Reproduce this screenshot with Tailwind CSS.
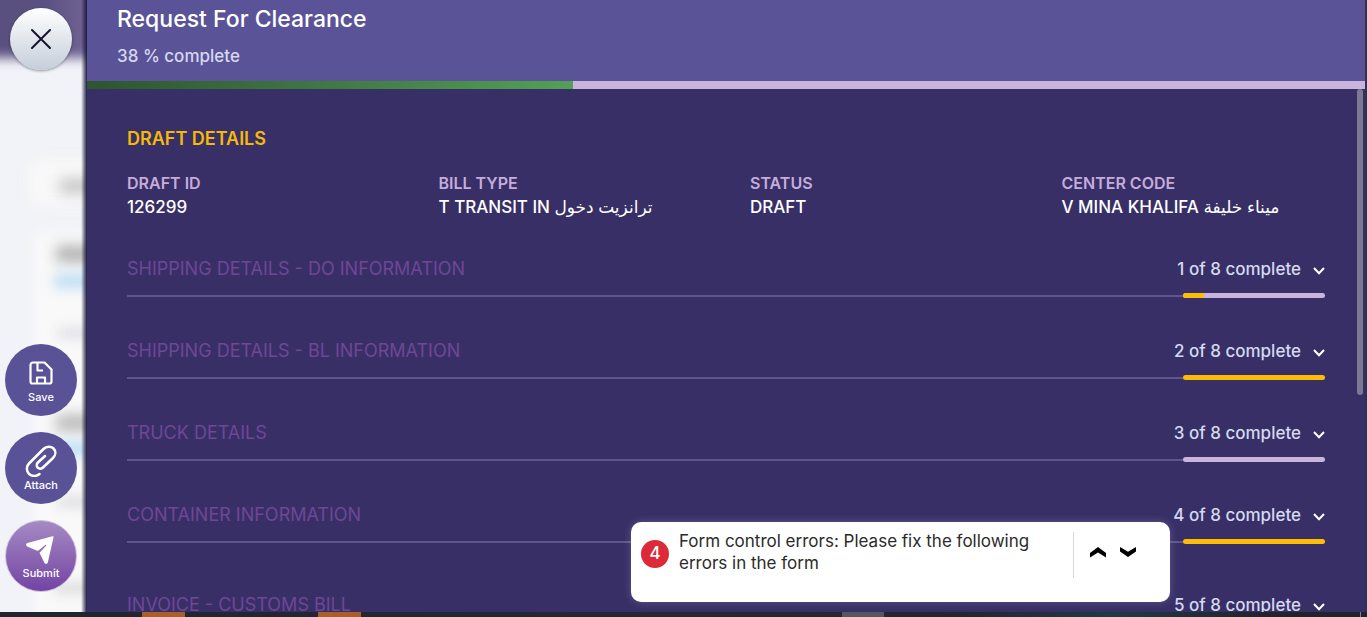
<!DOCTYPE html>
<html lang="en">
<head>
<meta charset="utf-8">
<meta name="viewport" content="width=device-width, initial-scale=1">
<title>Request For Clearance</title>
<script src="https://cdn.jsdelivr.net/npm/@tailwindcss/browser@4"></script>
</head>
<body class="flex h-screen flex-col overflow-hidden bg-[#2c3354] font-['Inter','Noto_Sans','DejaVu_Sans',sans-serif]">
<div class="relative flex min-h-0 flex-1 pr-0.5">

  <!-- Action rail over the blurred page -->
  <aside class="relative flex w-[87px] shrink-0 flex-col items-center overflow-hidden bg-[#f2f3f8] pt-2 pr-[5px] pb-5">
    <div class="absolute inset-0" aria-hidden="true">
      <div class="absolute -inset-x-4 -top-4 h-[74px] bg-linear-to-r from-[#59507f] from-50% to-[#7b6a9b] blur-[6px]"></div>
      <div class="absolute top-[160px] left-[30px] h-[46px] w-20 rounded-lg bg-[#f8f8f8] blur-[7px]"></div>
      <div class="absolute top-[232px] left-[34px] h-[400px] w-20 rounded-lg bg-[#f9f9f9] blur-[7px]"></div>
      <div class="absolute top-[179px] left-[60px] h-3.5 w-12 bg-[#c4c4c4] blur-[7px]"></div>
      <div class="absolute top-[246px] left-[56px] h-4 w-12 bg-[#b0b0b0] blur-[7px]"></div>
      <div class="absolute top-[273px] left-[54px] h-4 w-12 bg-[#c4e1f4] blur-[6px]"></div>
      <div class="absolute top-[327px] left-[58px] h-3 w-12 bg-[#e2e2e8] blur-[6px]"></div>
      <div class="absolute top-[415px] left-[56px] h-4 w-12 bg-[#b8b8b8] blur-[7px]"></div>
      <div class="absolute top-[441px] left-[54px] h-4 w-12 bg-[#c4e1f4] blur-[6px]"></div>
      <div class="absolute top-[496px] left-[58px] h-3 w-12 bg-[#e0e0e4] blur-[6px]"></div>
      <div class="absolute top-[582px] left-[54px] h-3 w-12 bg-[#dedede] blur-[6px]"></div>
      <div class="absolute inset-y-0 right-0 w-1.5 bg-linear-to-r from-transparent to-[#1d1b40]"></div>
    </div>
    <button type="button" aria-label="Close" class="relative flex size-[62px] items-center justify-center rounded-full bg-linear-to-b from-white to-[#c5ced9] shadow-[0_1px_3px_#00000066]">
      <svg class="size-5" viewBox="0 0 20 20" fill="none" stroke="#14142f" stroke-width="2" stroke-linecap="round"><path d="M1 1l18 18M19 1L1 19"/></svg>
    </button>
    <div class="relative mt-auto flex flex-col items-center gap-4">
      <button type="button" class="flex size-[72px] flex-col items-center justify-end rounded-full bg-[#5a5297] pb-3 text-white">
        <svg class="mb-[5px] size-6" viewBox="0 0 24 24" fill="none" stroke="currentColor" stroke-width="2.2" stroke-linejoin="round"><path d="M4 1.500h11.500L22.500 8.500V20.500a2 2 0 0 1-2 2H3.500a2 2 0 0 1-2-2V4a2.500 2.500 0 0 1 2.500-2.500zM8.500 2v7.500H14M8 22v-5.500h8V22"/></svg>
        <span class="text-[11px] leading-[14px] font-medium">Save</span>
      </button>
      <button type="button" class="flex size-[72px] flex-col items-center justify-end rounded-full bg-[#5a5297] pb-3 text-white">
        <svg class="mb-px h-8 w-8" viewBox="0 0 32 32" fill="none" stroke="currentColor" stroke-width="2.500" stroke-linecap="round"><path d="M14.500 29c-3 2.700-7.800 2.500-10.500-.2s-3-7.300 0-10.300L18.500 4c3-3 7.500-3 10-.5s2.500 6.500-.5 9.500L18 22.500c-1.500 1.500-4 1.500-5.300.2s-1.300-3.700.2-5.200L20 11"/></svg>
        <span class="text-[11px] leading-[14px] font-medium">Attach</span>
      </button>
      <button type="button" class="flex size-[72px] flex-col items-center justify-end rounded-full border border-[#cdbfdb] bg-linear-to-b from-[#a68bc3] to-[#7342a3] bg-origin-border pb-[11px] text-white">
        <svg class="mr-0.5 mb-0.5 size-7" viewBox="0 0 28 28" fill="currentColor"><path d="M26.500 .300c.8-.2 1.200.4 1 1.100L21.800 26.500c-.4 1.600-2.600 1.800-3.300.4l-5-10.200 6.600-6.900c.5-.6-.2-1.300-.8-.8l-7.500 6L1.200 10.500C-.3 9.800-.2 7.600 1.400 7.100z"/></svg>
        <span class="text-[11px] leading-[14px] font-medium">Submit</span>
      </button>
    </div>
  </aside>

  <!-- Clearance form panel -->
  <main class="relative flex min-w-0 flex-1 flex-col overflow-hidden bg-[#382f67]">
    <header class="flex h-[81px] shrink-0 flex-col bg-[#5b5398] px-[30px] pt-1">
      <h1 class="text-[23px] leading-[30px] font-medium text-white">Request For Clearance</h1>
      <p class="mt-2.5 text-[17px] leading-6 font-medium text-[#d5d9ee]">38 % complete</p>
    </header>
    <div class="h-2 shrink-0 bg-[#c9b5dc]" role="progressbar" aria-valuenow="38" aria-valuemin="0" aria-valuemax="100" aria-label="Form progress">
      <div class="h-full bg-linear-to-r from-[#2d5530] to-[#53a057]" style="width:38%"></div>
    </div>

    <div class="min-h-0 flex-1 overflow-hidden px-10 pt-[38px]">
      <h2 class="text-lg leading-6 font-semibold text-[#f5b90a]">DRAFT DETAILS</h2>
      <dl class="mt-5 grid grid-cols-4 gap-x-12 whitespace-nowrap">
        <div><dt class="text-base leading-6 font-semibold text-[#c5addb]">DRAFT ID</dt><dd class="text-[17px] leading-6 font-medium text-white">126299</dd></div>
        <div><dt class="text-base leading-6 font-semibold text-[#c5addb]">BILL TYPE</dt><dd class="text-[17px] leading-6 font-medium text-white">T TRANSIT IN <bdi lang="ar">ترانزيت دخول</bdi></dd></div>
        <div><dt class="text-base leading-6 font-semibold text-[#c5addb]">STATUS</dt><dd class="text-[17px] leading-6 font-medium text-white">DRAFT</dd></div>
        <div><dt class="text-base leading-6 font-semibold text-[#c5addb]">CENTER CODE</dt><dd class="text-[17px] leading-6 font-medium text-white">V MINA KHALIFA <bdi lang="ar">ميناء خليفة</bdi></dd></div>
      </dl>

      <div id="sections" class="mt-[38px] flex flex-col gap-[41px]"></div>
    </div>
    <div class="absolute top-[89px] right-0.5 h-[306px] w-1.5 rounded-full bg-[#7f7891]" aria-hidden="true"></div>
  </main>

  <!-- Error toast -->
  <div role="alert" class="absolute right-[197px] bottom-2.5 flex h-20 w-[539px] items-start rounded-[10px] bg-white px-2.5 pt-2 shadow-[0_0_8px_#ffffff33]">
    <span class="mt-2.5 flex size-7 shrink-0 items-center justify-center rounded-full bg-[#dc2a38] text-[17px] font-medium text-white">4</span>
    <p class="ml-2.5 flex-1 text-[17px] leading-[22px] text-[#2b2b2b]">Form control errors: Please fix the following errors in the form</p>
    <div class="mt-0.5 flex h-[46px] w-[87px] items-start gap-3.5 border-l border-[#d9d9d9] pt-3.5 pl-4">
      <button type="button" aria-label="Previous error"><svg class="h-3 w-4" viewBox="0 0 16 12"><path d="M0 7L8 1l8 6v4.500L8 6.500 0 11.500z"/></svg></button>
      <button type="button" aria-label="Next error"><svg class="h-3 w-4" viewBox="0 0 16 12"><path d="M0 1l8 4.800L16 1v4.500L8 11 0 5.500z"/></svg></button>
    </div>
  </div>
</div>

<!-- Strip of the desktop task bar -->
<footer class="flex h-[5px] shrink-0 bg-linear-to-r from-[#20252e] via-[#252833] to-[#20232c]" aria-hidden="true">
  <div class="ml-[142px] w-[43px] bg-[#a85f2b]"></div>
  <div class="ml-[133px] w-[43px] bg-[#a85f2b]"></div>
  <div class="ml-[481px] w-[42px] bg-[#55565e]"></div>
  <div class="ml-[76px] w-[300px] bg-linear-to-r from-transparent via-[#203a44] to-transparent"></div>
  <div class="mr-1.5 ml-auto w-px bg-[#80838a]"></div>
</footer>

<template id="row">
  <section class="last:pt-2">
    <button type="button" class="flex w-full items-center text-left">
      <span data-title class="flex-1 text-lg leading-6 text-[#6e4795]"></span>
      <span data-count class="text-[17px] leading-6 font-medium text-[#d5d9ee]"></span>
      <svg class="mt-1 ml-3 h-2 w-3" viewBox="0 0 12 8" fill="none" stroke="#fff" stroke-width="2"><path d="M1 1l5 5.300L11 1"/></svg>
    </button>
    <div class="mt-3 flex items-center">
      <div class="h-0.5 flex-1 bg-[#5f568c]"></div>
      <div class="h-[5px] w-[142px] overflow-hidden rounded-full bg-[#c9b5dc]"><div data-bar class="h-full bg-[#fdbd06]"></div></div>
    </div>
  </section>
</template>
<script>
  const rows = [
    ['SHIPPING DETAILS - DO INFORMATION', 15],
    ['SHIPPING DETAILS - BL INFORMATION', 100],
    ['TRUCK DETAILS', 0],
    ['CONTAINER INFORMATION', 100],
    ['INVOICE - CUSTOMS BILL', 0]
  ];
  rows.forEach(([title, pct], i) => {
    const n = document.getElementById('row').content.cloneNode(true);
    n.querySelector('[data-title]').textContent = title;
    n.querySelector('[data-count]').textContent = (i + 1) + ' of 8 complete';
    n.querySelector('[data-bar]').style.width = pct + '%';
    document.getElementById('sections').append(n);
  });
</script>
</body>
</html>
